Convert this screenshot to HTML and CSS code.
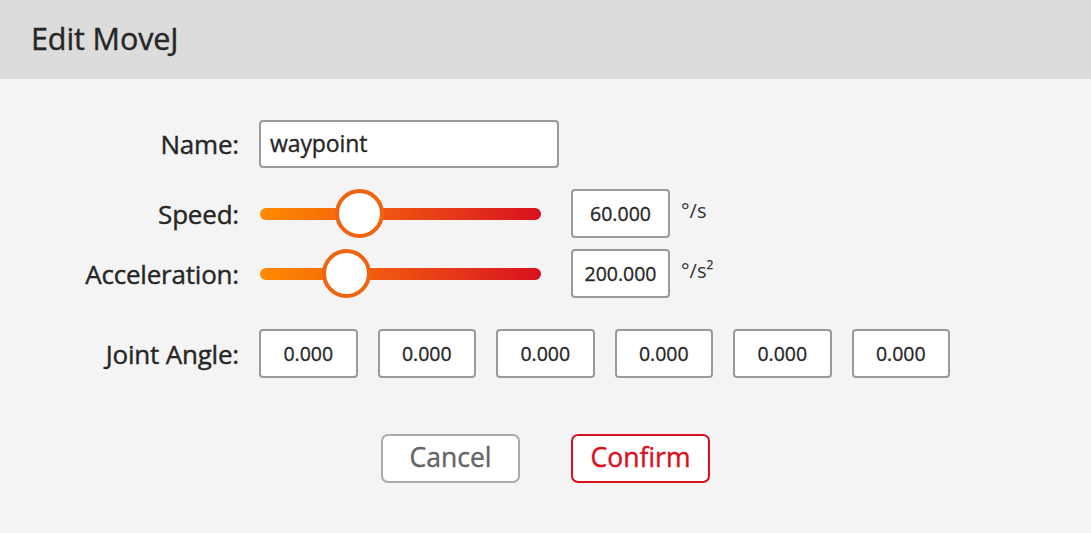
FILE: index.html
```html
<!DOCTYPE html>
<html lang="en">
<head>
<meta charset="utf-8">
<title>Edit MoveJ</title>
<link rel="stylesheet" href="styles.css">
</head>
<body>
<div class="dialog">
  <header class="title-bar">
    <h1 class="title">Edit MoveJ</h1>
  </header>
  <main class="content">
    <div class="row row-name">
      <div class="label">Name:</div>
      <div class="text-input">waypoint</div>
    </div>
    <div class="row row-speed">
      <div class="label">Speed:</div>
      <div class="slider">
        <div class="track"></div>
        <div class="thumb" style="left: 26.7%"></div>
      </div>
      <div class="value-box">60.000</div>
      <div class="unit">°/s</div>
    </div>
    <div class="row row-accel">
      <div class="label">Acceleration:</div>
      <div class="slider">
        <div class="track"></div>
        <div class="thumb" style="left: 22.1%"></div>
      </div>
      <div class="value-box">200.000</div>
      <div class="unit">°/s²</div>
    </div>
    <div class="row row-joint">
      <div class="label">Joint Angle:</div>
      <div class="joints">
        <div class="joint-box">0.000</div>
        <div class="joint-box">0.000</div>
        <div class="joint-box">0.000</div>
        <div class="joint-box">0.000</div>
        <div class="joint-box">0.000</div>
        <div class="joint-box">0.000</div>
      </div>
    </div>
    <div class="actions">
      <button class="btn btn-cancel">Cancel</button>
      <button class="btn btn-confirm">Confirm</button>
    </div>
  </main>
</div>
</body>
</html>
```

FILE: styles.css
```css
* { box-sizing: border-box; }
html, body {
  margin: 0;
  padding: 0;
  background: #f4f4f4;
}
body {
  font-family: "Open Sans", "Noto Sans", sans-serif;
  color: #262626;
  width: 1091px;
  height: 533px;
  overflow: hidden;
}
.dialog {
  display: flex;
  flex-direction: column;
  height: 100%;
}
.title-bar {
  height: 79px;
  background: #dcdcdc;
  display: flex;
  align-items: center;
  padding-left: 31px;
}
.title {
  margin: 0;
  font-size: 30.5px;
  font-weight: 400;
  color: #262626;
  letter-spacing: -0.1px;
  line-height: 1;
  padding-bottom: 3px;
  -webkit-text-stroke: 0.4px #262626;
}
.content {
  flex: 1;
  display: flex;
  flex-direction: column;
  padding-top: 41px;
}
.row {
  display: flex;
  align-items: center;
}
.label {
  width: 240px;
  text-align: right;
  font-size: 26px;
  letter-spacing: -0.2px;
  padding-right: 1px;
  flex-shrink: 0;
  -webkit-text-stroke: 0.4px #262626;
}
.text-input {
  margin-left: 19px;
  width: 300px;
  height: 48px;
  background: #fff;
  border: 2px solid #9a9a9a;
  border-radius: 4px;
  display: flex;
  align-items: center;
  padding-left: 9px;
  font-size: 23px;
  letter-spacing: -0.1px;
  padding-bottom: 2px;
  -webkit-text-stroke: 0.35px #262626;
}
.row-name { height: 48px; }
.row-speed { height: 49px; margin-top: 21px; }
.row-accel { height: 49px; margin-top: 11px; }
.row-joint { height: 49px; margin-top: 31px; }

.slider {
  position: relative;
  margin-left: 20px;
  width: 281px;
  height: 49px;
  display: flex;
  align-items: center;
}
.track {
  width: 100%;
  height: 12px;
  border-radius: 6px;
  background: linear-gradient(to right, #ff8c00 0%, #f3620c 35%, #e5361a 70%, #d8101f 100%);
}
.thumb {
  position: absolute;
  top: 0;
  width: 49px;
  height: 49px;
  border-radius: 50%;
  background: #fff;
  border: 4px solid #f06410;
}
.value-box {
  margin-left: 30px;
  width: 99px;
  height: 49px;
  background: #fff;
  border: 2px solid #9a9a9a;
  border-radius: 4px;
  display: flex;
  align-items: center;
  justify-content: center;
  font-size: 19.5px;
  padding-bottom: 1px;
  -webkit-text-stroke: 0.3px #262626;
}
.unit {
  margin-left: 11px;
  font-size: 20px;
  color: #333;
  align-self: flex-start;
  padding-top: 8px;
}
.joints {
  margin-left: 19px;
  display: flex;
  gap: 20px;
}
.joint-box {
  width: 98.5px;
  height: 49px;
  background: #fff;
  border: 2px solid #9a9a9a;
  border-radius: 4px;
  display: flex;
  align-items: center;
  justify-content: center;
  font-size: 19.5px;
  padding-bottom: 1px;
  -webkit-text-stroke: 0.3px #262626;
}
.actions {
  margin-top: 56px;
  display: flex;
  justify-content: center;
  gap: 51px;
}
.btn {
  width: 139px;
  height: 49px;
  background: #fff;
  border-radius: 7px;
  font-family: "Open Sans", "Noto Sans", sans-serif;
  font-size: 26.5px;
  padding: 0 0 3px;
  cursor: pointer;
}
.btn-cancel {
  border: 2px solid #aaaaaa;
  color: #666;
  -webkit-text-stroke: 0.4px #666;
}
.btn-confirm {
  border: 2px solid #d8101f;
  color: #d8101f;
  -webkit-text-stroke: 0.4px #d8101f;
}
```
